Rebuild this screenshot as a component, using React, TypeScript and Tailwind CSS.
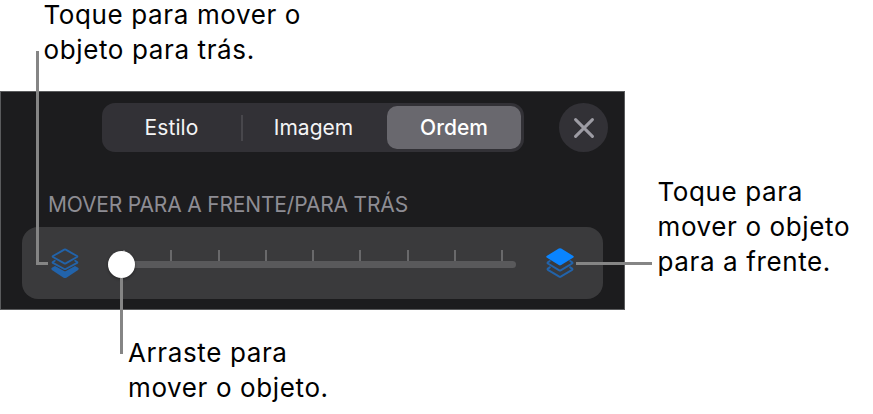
import type { ReactNode } from "react";
import clsx from "clsx";

const TABS = ["Estilo", "Imagem", "Ordem"];
const TICKS = Array.from({ length: 9 }, (_, i) => i);

function Caption({ className, children }: { className?: string; children: ReactNode }) {
  return (
    <p
      className={clsx(
        "text-[26px] leading-[35px] tracking-[0.62px] whitespace-nowrap text-black",
        className,
      )}
    >
      {children}
    </p>
  );
}

function SendToBackIcon() {
  return (
    <svg width="30" height="32" viewBox="0 0 30 32" strokeLinejoin="round" strokeLinecap="round">
      <path
        d="M5 19 1.9 20.8 Q.5 21.9 1.9 23 L13.6 30.7 Q15 31.5 16.4 30.7 L28.1 23 Q29.5 21.9 28.1 20.8 L25 19 16 24.1 Q15 24.6 14 24.1Z"
        fill="#2263aa"
      />
      <path
        d="M4.8 13.7 2.9 14.9 Q2.2 15.4 2.9 15.9 L14.3 22 Q15 22.4 15.7 22 L27.1 15.9 Q27.8 15.4 27.1 14.9 L25.2 13.7"
        fill="none"
        stroke="#2263aa"
        strokeWidth="1.8"
      />
      <path
        d="M14.3 2.6 Q15 2.2 15.7 2.6 L27 9 Q27.8 9.5 27 10 L15.7 16.4 Q15 16.8 14.3 16.4 L3 10 Q2.2 9.5 3 9Z"
        fill="none"
        stroke="#2263aa"
        strokeWidth="1.9"
      />
    </svg>
  );
}

function BringToFrontIcon() {
  return (
    <svg width="30" height="32" viewBox="0 0 30 32" strokeLinejoin="round" strokeLinecap="round">
      <g fill="none" stroke="#2263aa" strokeWidth="2">
        <path d="M4.8 20.3 2.9 21.6 Q2.2 22.2 2.9 22.8 L14.3 29.7 Q15 30.1 15.7 29.7 L27.1 22.8 Q27.8 22.2 27.1 21.6 L25.2 20.3" />
        <path d="M4.8 14 2.9 15.3 Q2.2 15.9 2.9 16.5 L14.3 23.4 Q15 23.8 15.7 23.4 L27.1 16.5 Q27.8 15.9 27.1 15.3 L25.2 14" />
      </g>
      <path
        d="M13.8 1.5 Q15 .8 16.2 1.5 L28 8.7 Q29.6 9.7 28 10.7 L16.2 18.1 Q15 18.8 13.8 18.1 L2 10.7 Q.4 9.7 2 8.7Z"
        fill="#0a84ff"
      />
    </svg>
  );
}

function SegmentedControl({ selected }: { selected: string }) {
  return (
    <div className="flex h-[49px] w-[422px] items-center rounded-[13px] bg-[#323136] py-[3px] text-[21px]">
      {TABS.map((tab, i) => (
        <div key={tab} className="contents">
          {i === 1 && <span className="h-[26px] w-[2px] bg-[#48474c]" />}
          <button
            className={clsx(
              "h-[43px]",
              i === 0 && "w-[139px] tracking-[0.1px] text-[#f4f4f5]",
              i === 1 && "w-[144px] pr-[3px] text-[#f4f4f5]",
              tab === selected && "w-[134px] rounded-[10px] bg-[#69686e] font-medium text-white",
            )}
          >
            {tab}
          </button>
        </div>
      ))}
    </div>
  );
}

function OrderSlider() {
  return (
    <div className="relative h-[27px] w-[408px]">
      {/* tick marks sit on top of the track */}
      <div className="ml-[15px] flex w-[380px] justify-between">
        {TICKS.map((t) => (
          <span key={t} className="h-[11px] w-[2px] bg-[#69696b]" />
        ))}
      </div>
      <div className="h-[7px] rounded-full bg-[#59595b]" />
      <span className="absolute top-[1px] left-0 size-[27px] rounded-full bg-white shadow-[0_1px_3px_rgba(0,0,0,0.4)]" />
    </div>
  );
}

function FormatPanel() {
  return (
    <section className="h-[219px] w-[625px] border border-[#5a5b5d] bg-[#1c1c1e]">
      <div className="flex justify-between pt-[11px] pr-4 pl-[101px]">
        <SegmentedControl selected="Ordem" />
        <button className="flex size-[49px] items-center justify-center rounded-full bg-[#323136]">
          <svg width="20" height="20" viewBox="0 0 20 20">
            <path
              d="M1.6 1.6 18.4 18.4M18.4 1.6 1.6 18.4"
              stroke="#9d9ca4"
              strokeWidth="3"
              strokeLinecap="round"
            />
          </svg>
        </button>
      </div>
      <h2 className="mt-[39px] ml-[47px] text-[21px] leading-[28px] tracking-[-0.17px] whitespace-nowrap text-[#8e8d94]">
        MOVER PARA A FRENTE/PARA TRÁS
      </h2>
      <div className="mt-[8px] ml-[21px] flex h-[72px] w-[581px] items-start rounded-[16px] bg-[#3a3a3c]">
        <div className="mt-[20px] ml-[28px]">
          <SendToBackIcon />
        </div>
        <div className="mt-[23px] ml-[28px]">
          <OrderSlider />
        </div>
        <div className="mt-[20px] ml-[29px]">
          <BringToFrontIcon />
        </div>
      </div>
    </section>
  );
}

export default function App() {
  return (
    <main className="relative h-[414px] w-[873px] overflow-hidden bg-white font-['Inter',sans-serif]">
      <Caption className="-mt-[3px] mb-[3px] h-[91px] pl-[43.5px]">
        Toque para mover o
        <br />
        objeto para trás.
      </Caption>
      <div className="flex">
        <FormatPanel />
        <Caption className="mt-[83px] ml-[32.5px]">
          Toque para
          <br />
          mover o objeto
          <br />
          para a frente.
        </Caption>
      </div>
      <Caption className="mt-[25px] ml-[128px]">
        Arraste para
        <br />
        mover o objeto.
      </Caption>

      {/* leader lines from the captions to the controls */}
      <span className="absolute top-[51px] left-[36px] h-[214px] w-[12px] border-b-[3px] border-l-[3px] border-[#858585]" />
      <span className="absolute top-[278px] left-[120px] h-[76px] w-[3px] bg-[#858585]" />
      <span className="absolute top-[262px] left-[576px] h-[3px] w-[76px] bg-[#858585]" />
    </main>
  );
}
